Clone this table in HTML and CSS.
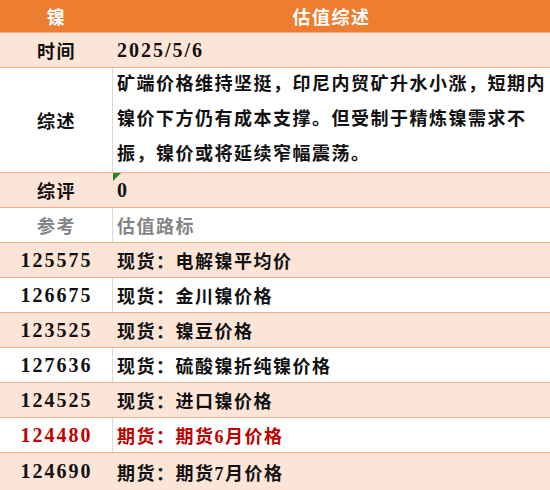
FILE: index.html
```html
<!DOCTYPE html>
<html lang="zh-CN">
<head>
<meta charset="utf-8">
<title>镍 估值综述</title>
<link rel="stylesheet" href="styles.css">
</head>
<body>
<div class="sheet">
  <div class="row head">
    <div class="c1">镍</div>
    <div class="c2 center">估值综述</div>
  </div>
  <div class="row peach">
    <div class="c1">时间</div>
    <div class="c2 num">2025/5/6</div>
  </div>
  <div class="row white tall">
    <div class="c1">综述</div>
    <div class="c2 para">矿端价格维持坚挺，印尼内贸矿升水小涨，短期内<br>镍价下方仍有成本支撑。但受制于精炼镍需求不<br>振，镍价或将延续窄幅震荡。</div>
  </div>
  <div class="row peach">
    <div class="c1">综评</div>
    <div class="c2 num flagged"><span class="tri"></span>0</div>
  </div>
  <div class="row white grey">
    <div class="c1">参考</div>
    <div class="c2">估值路标</div>
  </div>
  <div class="row peach">
    <div class="c1 num">125575</div>
    <div class="c2">现货：电解镍平均价</div>
  </div>
  <div class="row white">
    <div class="c1 num">126675</div>
    <div class="c2">现货：金川镍价格</div>
  </div>
  <div class="row peach">
    <div class="c1 num">123525</div>
    <div class="c2">现货：镍豆价格</div>
  </div>
  <div class="row white">
    <div class="c1 num">127636</div>
    <div class="c2">现货：硫酸镍折纯镍价格</div>
  </div>
  <div class="row peach">
    <div class="c1 num">124525</div>
    <div class="c2">现货：进口镍价格</div>
  </div>
  <div class="row white red">
    <div class="c1 num">124480</div>
    <div class="c2">期货：期货6月价格</div>
  </div>
  <div class="row peach last">
    <div class="c1 num">124690</div>
    <div class="c2">期货：期货7月价格</div>
  </div>
</div>
</body>
</html>
```

FILE: styles.css
```css
html, body {
  margin: 0;
  padding: 0;
  background: #ffffff;
}

.sheet {
  width: 550px;
  font-family: "Liberation Serif", "Noto Sans CJK SC", serif;
  font-weight: 700;
  font-size: 18px;
  letter-spacing: 1.5px;
  color: #111111;
}

.row {
  display: grid;
  grid-template-columns: 113px 1fr;
  height: 34px;
  border-top: 1px solid #f4b084;
}

.row .c1 {
  display: flex;
  align-items: center;
  justify-content: center;
  border-right: 1px solid transparent;
  padding-left: 1px;
}

.row .c2 {
  display: flex;
  align-items: center;
  padding-left: 4px;
  white-space: nowrap;
  position: relative;
}

.row.head {
  height: 32px;
  border-top: none;
  background: #ed7d31;
  color: #ffffff;
}

.row.head .c2.center {
  justify-content: center;
  padding-left: 0;
}

.row.peach {
  background: #fce4d6;
}

.row.white {
  background: #ffffff;
}

.row.white .c1 {
  border-right-color: #dadada;
}

.row.tall {
  height: 104px;
}

.row .c2.para {
  display: block;
  line-height: 35px;
  margin-top: -1px;
}

.num {
  font-weight: 700;
  font-size: 20px;
  letter-spacing: 2px;
}

.row.grey {
  color: #858585;
}

.row.red {
  color: #c00000;
}

.row.last {
  height: 37px;
}

.tri {
  position: absolute;
  left: 0;
  top: 0;
  width: 0;
  height: 0;
  border-top: 8px solid #21862b;
  border-right: 8px solid transparent;
}
```
